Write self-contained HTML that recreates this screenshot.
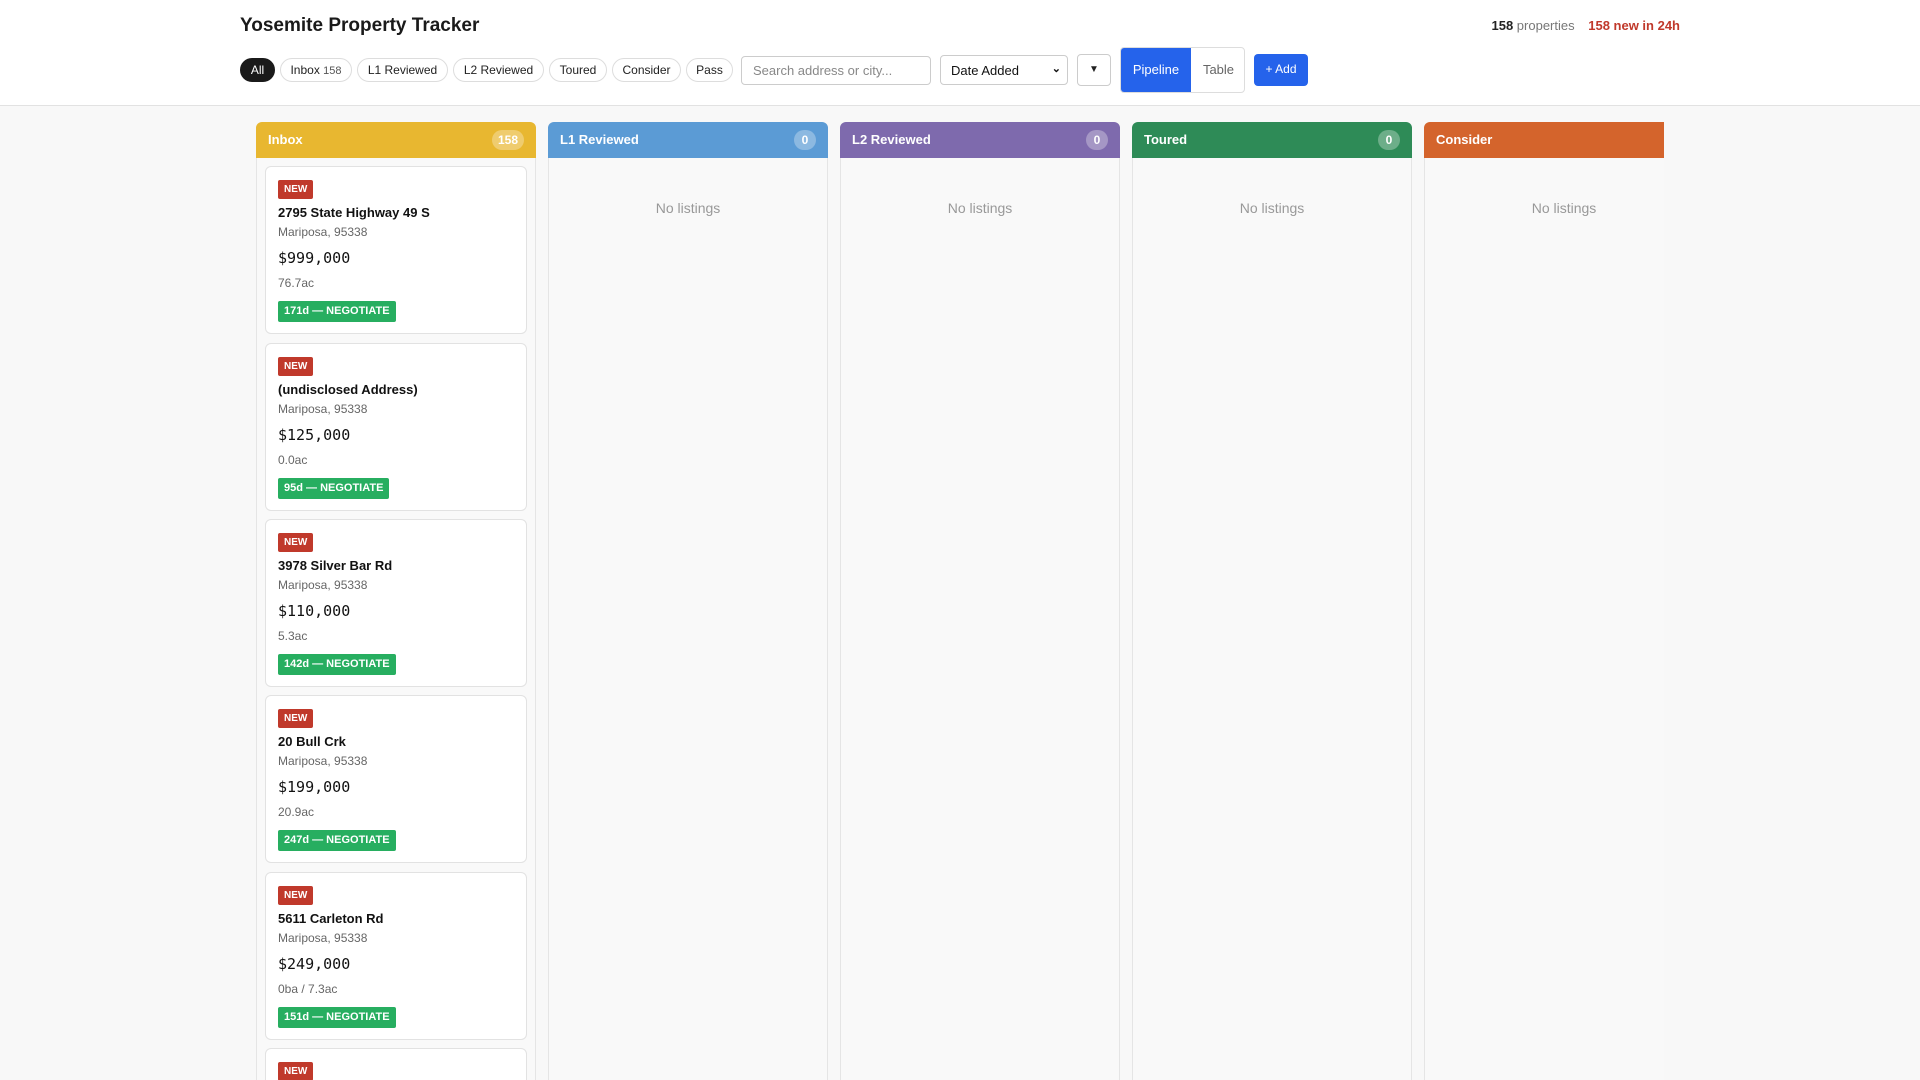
<!DOCTYPE html>
<html><head><meta charset="utf-8"><style>
*{box-sizing:border-box;margin:0;padding:0}
body{width:1920px;height:1080px;overflow:hidden;background:#f8f8f8;font-family:"Liberation Sans",sans-serif;color:#222}
.top{background:#fff;height:106px;border-bottom:1px solid #e2e2e2;position:relative}
.title{position:absolute;left:240px;top:15px;font-size:19px;font-weight:bold;color:#1a1a1a}
.stats{position:absolute;right:240px;top:18px;font-size:13px;color:#777}
.stats b{color:#222}.stats .n{color:#c0392b;font-weight:bold;margin-left:10px}
.pill{position:absolute;top:58px;height:24px;border:1px solid #ddd;border-radius:12px;font-size:12px;line-height:22px;text-align:center;background:#fff;color:#222}
.pill.on{background:#1a1a1a;color:#fff;border-color:#1a1a1a}
.pill small{font-size:11px;color:#555}
.inp{position:absolute;top:56px;left:741px;width:190px;height:29px;border:1px solid #ccc;border-radius:4px;font-size:13px;color:#888;padding:6px 11px}
.sel{position:absolute;top:55px;left:940px;width:128px;height:30px;border:1px solid #ccc;border-radius:4px;font-size:13px;padding:7px 10px;color:#111}
.sel i{position:absolute;right:6px;top:6px;font-style:normal;font-size:11px;font-weight:bold}
.fb{position:absolute;top:54px;left:1077px;width:34px;height:32px;border:1px solid #ccc;border-radius:4px;font-size:10px;text-align:center;line-height:30px}
.grp{position:absolute;top:47px;left:1120px;width:125px;height:46px;border:1px solid #ddd;border-radius:4px;overflow:hidden;font-size:13px}
.grp span{position:absolute;top:0;height:46px;line-height:44px;text-align:center}
.add{position:absolute;top:54px;left:1254px;width:54px;height:32px;background:#2563eb;color:#fff;border-radius:4px;font-size:12px;text-align:center;line-height:31px}
.board{position:absolute;top:122px;left:256px;width:1408px;height:958px;overflow:hidden}
.col{position:absolute;top:0;width:280px;height:960px;background:#f9f9f9;border:1px solid #e5e5e5;border-top:none;border-radius:6px 6px 0 0}
.ch{height:36px;margin:0 -1px;border-radius:6px 6px 0 0;color:#fff;font-weight:bold;font-size:13px;padding:0 12px;line-height:36px;position:relative}
.cnt{position:absolute;right:12px;top:8px;height:20px;min-width:22px;padding:0 6px;border-radius:10px;background:rgba(255,255,255,.3);font-size:12px;line-height:20px;text-align:center}
.empty{text-align:center;color:#999;font-size:14px;margin-top:42px}
.card{position:absolute;left:8px;width:262px;height:168px;background:#fff;border:1px solid #e2e2e2;border-radius:6px;padding:12px 12px}
.new{display:inline-block;background:#c0392b;color:#fff;font-size:10px;font-weight:bold;height:19px;line-height:19px;padding:0 6px;border-radius:2px}
.addr{font-weight:bold;font-size:13px;margin-top:6px;color:#111}
.city{font-size:12px;color:#666;margin-top:5px}
.price{font-family:"DejaVu Sans Mono","Liberation Mono",monospace;font-size:15px;margin-top:10px;color:#111}
.ac{font-size:12px;color:#666;margin-top:9px}
.tag{display:inline-block;background:#27ae60;color:#fff;font-size:11px;font-weight:bold;height:21px;line-height:21px;padding:0 6px;border-radius:2px;margin-top:11px}
</style></head><body>
<div class="top">
<div class="title">Yosemite Property Tracker</div>
<div class="stats"><b>158</b> properties <span class="n">158 new in 24h</span></div>
<div class="pill on" style="left:240px;width:35px">All</div>
<div class="pill" style="left:280px;width:72px">Inbox <small>158</small></div>
<div class="pill" style="left:357px;width:91px">L1 Reviewed</div>
<div class="pill" style="left:453px;width:91px">L2 Reviewed</div>
<div class="pill" style="left:549px;width:58px">Toured</div>
<div class="pill" style="left:612px;width:69px">Consider</div>
<div class="pill" style="left:686px;width:47px">Pass</div>
<div class="inp">Search address or city...</div>
<div class="sel">Date Added<i>⌄</i></div>
<div class="fb">▼</div>
<div class="grp"><span style="left:0;width:70px;background:#2563eb;color:#fff">Pipeline</span><span style="left:70px;width:55px;color:#666">Table</span></div>
<div class="add">+ Add</div>
</div>
<div class="board">
<div class="col" style="left:0">
<div class="ch" style="background:#e8b730">Inbox<span class="cnt">158</span></div>
<div class="card" style="top:44px"><span class="new">NEW</span><div class="addr">2795 State Highway 49 S</div><div class="city">Mariposa, 95338</div><div class="price">$999,000</div><div class="ac">76.7ac</div><span class="tag">171d — NEGOTIATE</span></div>
<div class="card" style="top:221px"><span class="new">NEW</span><div class="addr">(undisclosed Address)</div><div class="city">Mariposa, 95338</div><div class="price">$125,000</div><div class="ac">0.0ac</div><span class="tag">95d — NEGOTIATE</span></div>
<div class="card" style="top:397px"><span class="new">NEW</span><div class="addr">3978 Silver Bar Rd</div><div class="city">Mariposa, 95338</div><div class="price">$110,000</div><div class="ac">5.3ac</div><span class="tag">142d — NEGOTIATE</span></div>
<div class="card" style="top:573px"><span class="new">NEW</span><div class="addr">20 Bull Crk</div><div class="city">Mariposa, 95338</div><div class="price">$199,000</div><div class="ac">20.9ac</div><span class="tag">247d — NEGOTIATE</span></div>
<div class="card" style="top:750px"><span class="new">NEW</span><div class="addr">5611 Carleton Rd</div><div class="city">Mariposa, 95338</div><div class="price">$249,000</div><div class="ac">0ba / 7.3ac</div><span class="tag">151d — NEGOTIATE</span></div>
<div class="card" style="top:926px"><span class="new">NEW</span></div>
</div>
<div class="col" style="left:292px"><div class="ch" style="background:#5b9bd5">L1 Reviewed<span class="cnt">0</span></div><div class="empty">No listings</div></div>
<div class="col" style="left:584px"><div class="ch" style="background:#7e6aad">L2 Reviewed<span class="cnt">0</span></div><div class="empty">No listings</div></div>
<div class="col" style="left:876px"><div class="ch" style="background:#2e8b57">Toured<span class="cnt">0</span></div><div class="empty">No listings</div></div>
<div class="col" style="left:1168px"><div class="ch" style="background:#d4642c">Consider<span class="cnt">0</span></div><div class="empty">No listings</div></div>
</div>
</body></html>
